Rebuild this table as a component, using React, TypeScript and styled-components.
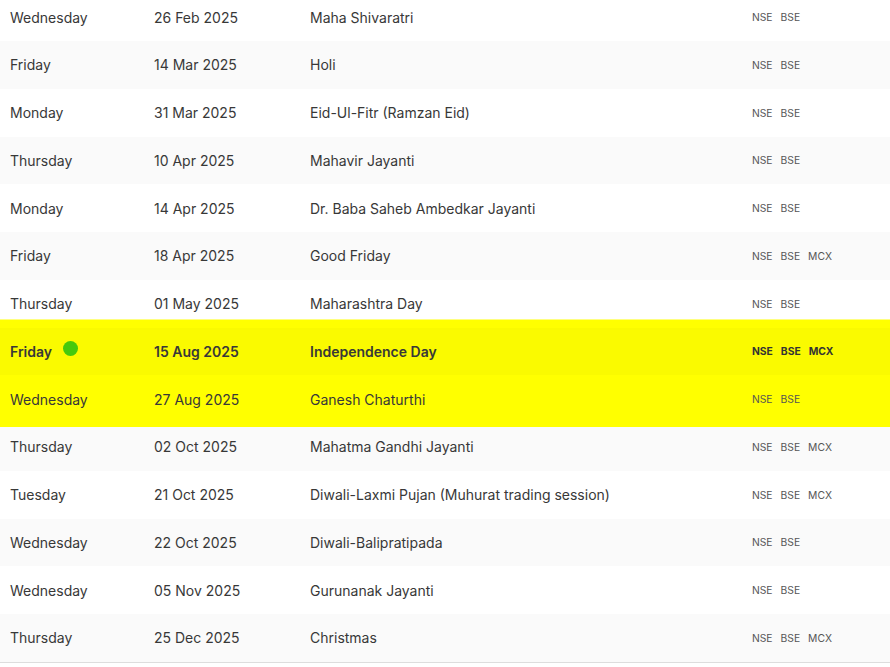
import React from 'react';
import styled, { createGlobalStyle, css } from 'styled-components';

interface Holiday {
  day: string;
  date: string;
  name: string;
  exchanges: string[];
  live?: boolean;
  highlight?: 'top' | 'bottom';
}

const holidays: Holiday[] = [
  { day: 'Wednesday', date: '26 Feb 2025', name: 'Maha Shivaratri', exchanges: ['NSE', 'BSE'] },
  { day: 'Friday', date: '14 Mar 2025', name: 'Holi', exchanges: ['NSE', 'BSE'] },
  { day: 'Monday', date: '31 Mar 2025', name: 'Eid-Ul-Fitr (Ramzan Eid)', exchanges: ['NSE', 'BSE'] },
  { day: 'Thursday', date: '10 Apr 2025', name: 'Mahavir Jayanti', exchanges: ['NSE', 'BSE'] },
  { day: 'Monday', date: '14 Apr 2025', name: 'Dr. Baba Saheb Ambedkar Jayanti', exchanges: ['NSE', 'BSE'] },
  { day: 'Friday', date: '18 Apr 2025', name: 'Good Friday', exchanges: ['NSE', 'BSE', 'MCX'] },
  { day: 'Thursday', date: '01 May 2025', name: 'Maharashtra Day', exchanges: ['NSE', 'BSE'] },
  { day: 'Friday', date: '15 Aug 2025', name: 'Independence Day', exchanges: ['NSE', 'BSE', 'MCX'], live: true, highlight: 'top' },
  { day: 'Wednesday', date: '27 Aug 2025', name: 'Ganesh Chaturthi', exchanges: ['NSE', 'BSE'], highlight: 'bottom' },
  { day: 'Thursday', date: '02 Oct 2025', name: 'Mahatma Gandhi Jayanti', exchanges: ['NSE', 'BSE', 'MCX'] },
  { day: 'Tuesday', date: '21 Oct 2025', name: 'Diwali-Laxmi Pujan (Muhurat trading session)', exchanges: ['NSE', 'BSE', 'MCX'] },
  { day: 'Wednesday', date: '22 Oct 2025', name: 'Diwali-Balipratipada', exchanges: ['NSE', 'BSE'] },
  { day: 'Wednesday', date: '05 Nov 2025', name: 'Gurunanak Jayanti', exchanges: ['NSE', 'BSE'] },
  { day: 'Thursday', date: '25 Dec 2025', name: 'Christmas', exchanges: ['NSE', 'BSE', 'MCX'] },
];

const GlobalStyle = createGlobalStyle`
  html, body {
    margin: 0;
    padding: 0;
    background: #ffffff;
    overflow: hidden;
  }
  body {
    font-family: Inter, 'Noto Sans', sans-serif;
    color: #333;
  }
`;

const Table = styled.div`
  width: 890px;
  margin-top: -6.75px;
  border-bottom: 1px solid #dddddd;
`;

const Row = styled.div<{ $striped: boolean; $highlight?: 'top' | 'bottom'; $bold?: boolean }>`
  display: grid;
  grid-template-columns: 144px 156px 442px 1fr;
  align-items: center;
  height: 47.75px;
  padding-left: 10px;
  font-size: 14px;
  color: #383838;
  background: ${(p) => (p.$striped ? '#fafafa' : '#ffffff')};
  font-weight: ${(p) => (p.$bold ? 600 : 400)};

  ${(p) =>
    p.$highlight === 'top' &&
    css`
      position: relative;
      background: #fafa00;
      box-shadow: 0 -8.5px 0 #ffff00;
    `}
  ${(p) =>
    p.$highlight === 'bottom' &&
    css`
      position: relative;
      background: #ffff00;
      box-shadow: 0 4px 0 #ffff00;
    `}
`;

const Cell = styled.div`
  display: flex;
  align-items: center;
  white-space: nowrap;
`;

const LiveDot = styled.span`
  display: inline-block;
  width: 15px;
  height: 15px;
  border-radius: 50%;
  background: #45c90c;
  margin-left: 11px;
  position: relative;
  top: -3px;
`;

const Exchanges = styled.div`
  display: flex;
  gap: 8px;
`;

const Tag = styled.span<{ $bold?: boolean }>`
  font-size: 10.3px;
  color: ${(p) => (p.$bold ? '#333' : '#555')};
  font-weight: ${(p) => (p.$bold ? 700 : 400)};
`;

export default function App() {
  return (
    <>
      <GlobalStyle />
      <Table>
        {holidays.map((h, i) => (
          <Row key={h.date} $striped={i % 2 === 1} $highlight={h.highlight} $bold={h.live}>
            <Cell>
              {h.day}
              {h.live && <LiveDot />}
            </Cell>
            <Cell>{h.date}</Cell>
            <Cell>{h.name}</Cell>
            <Exchanges>
              {h.exchanges.map((x) => (
                <Tag key={x} $bold={h.live}>
                  {x}
                </Tag>
              ))}
            </Exchanges>
          </Row>
        ))}
      </Table>
    </>
  );
}
